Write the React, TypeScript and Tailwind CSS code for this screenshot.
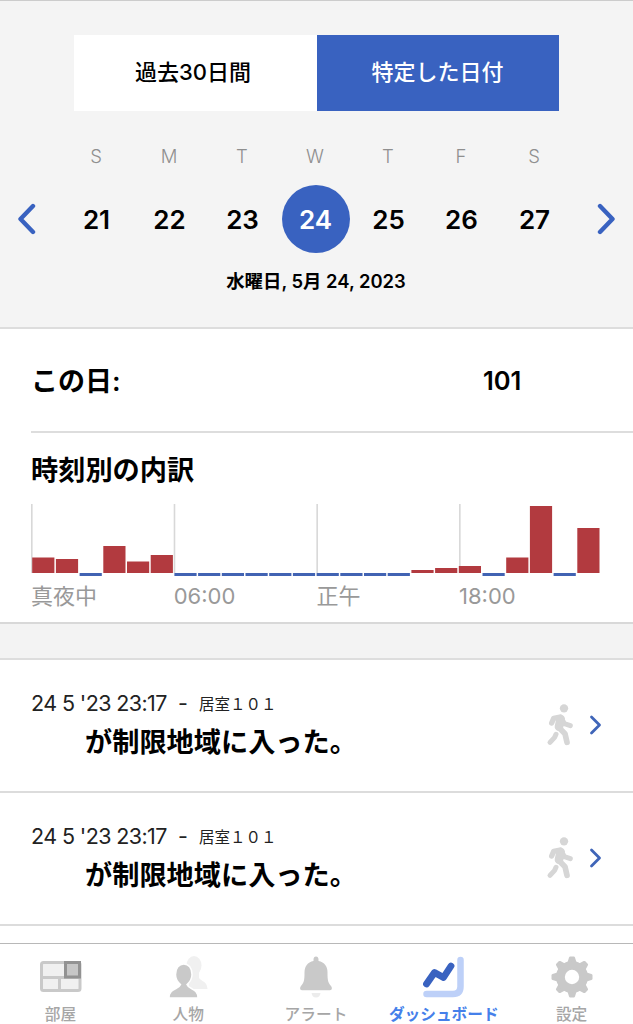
import React from 'react';

type DayItem = { letter: string; date: number };

const days: DayItem[] = [
    { letter: 'S', date: 21 },
    { letter: 'M', date: 22 },
    { letter: 'T', date: 23 },
    { letter: 'W', date: 24 },
    { letter: 'T', date: 25 },
    { letter: 'F', date: 26 },
    { letter: 'S', date: 27 },
];

// one value per hour, 0 draws the blue baseline mark
const hours = [15.5, 14, 0, 27, 11.5, 18, 0, 0, 0, 0, 0, 0, 0, 0, 0, 0, 3, 5, 7, 0, 15.5, 67, 0, 45];

const hourLabels = ['真夜中', '06:00', '正午', '18:00'];

const events = [
    { id: 1, time: "24 5 '23 23:17", room: '居室１０１', text: 'が制限地域に入った。' },
    { id: 2, time: "24 5 '23 23:17", room: '居室１０１', text: 'が制限地域に入った。' },
];

const Arrow: React.FC<{ left?: boolean }> = ({ left }) => (
    <svg width="20" height="32" viewBox="0 0 20 32" fill="none" stroke="#3962c0" strokeWidth="4.4" strokeLinecap="round" strokeLinejoin="round">
        <path d={left ? 'M16 3 3.5 16 16 29' : 'M4 3 16.5 16 4 29'} />
    </svg>
);

const HourChart: React.FC = () => (
    <svg width="602" height="73" viewBox="0 0 602 73" className="block">
        {[0, 6, 12, 18].map(h => (
            <rect key={h} x={h * 23.78} y="0" width="1.6" height="69" fill="#d8d8d8" />
        ))}
        {hours.map((v, i) => (
            v > 0
                ? <rect key={i} x={1.2 + i * 23.7} y={69 - v} width="22.2" height={v} fill="#b23a3f" />
                : <rect key={i} x={1.2 + i * 23.7} y="69" width="22.2" height="3" fill="#4163b3" />
        ))}
    </svg>
);

const WalkIcon: React.FC = () => (
    <svg width="30" height="44" viewBox="80 70 90 132" fill="none" stroke="#d6d6d6" strokeLinecap="round" strokeLinejoin="round">
        <circle cx="134" cy="86" r="12.5" fill="#d6d6d6" stroke="none" />
        <path d="M97 130 103 116 122 112" strokeWidth="16" />
        <path d="M126 115 135 132 153 138" strokeWidth="15" />
        <path d="M124 118 119 141" strokeWidth="26" />
        <path d="M120 145 137 162 143 188" strokeWidth="17" />
        <path d="M110 164 106 173 92 188" strokeWidth="15" />
    </svg>
);

const RoomsIcon: React.FC = () => (
    <svg width="42" height="42" viewBox="0 0 42 42">
        <rect x="1.5" y="6.5" width="38.5" height="28" rx="2" fill="#f0f0f0" stroke="#c9c9c9" strokeWidth="3" />
        <path d="M2 21.5H40M19.5 21.5V34" stroke="#c9c9c9" strokeWidth="3" />
        <rect x="25.5" y="6.5" width="14" height="14.5" fill="#c6c6c6" stroke="#929292" strokeWidth="3" />
    </svg>
);

const PeopleIcon: React.FC = () => (
    <svg width="42" height="42" viewBox="0 0 42 42">
        <g fill="#f0f0f0">
            <ellipse cx="26" cy="9.5" rx="7.5" ry="9.5" />
            <path d="M21 16h10v6c3 4 8 3 8.5 11H21Z" />
        </g>
        <path d="M1 42c0-10 10-8.5 11.5-13.5C9.5 26 7.5 23 7.5 18.5 7.5 12 11 8 15.8 8S24 12 24 18.5c0 4.5-2 7.5-5 10C20.5 33.5 30 32 30 42Z" fill="#c9c9c9" stroke="#fff" strokeWidth="1.5" />
    </svg>
);

const BellIcon: React.FC = () => (
    <svg width="42" height="42" viewBox="0 0 42 42">
        <path d="M16.5 37h9c-.5 3-2 4.500-4.500 4.500s-4-1.500-4.500-4.500Z" fill="#ececec" />
        <path d="M21 .5c1.500 0 2.500 1 2.500 3v1.500c6 1 9 5.500 9 11.500 0 8 .5 10 3.500 13.500 1.500 2 1 4.200-1 4.200H7c-2 0-2.500-2.200-1-4.200 3-3.500 3.500-5.500 3.500-13.500 0-6 3-10.500 9-11.500v-1.500c0-2 1-3 2.500-3Z" fill="#c9c9c9" />
    </svg>
);

const DashboardIcon: React.FC = () => (
    <svg width="42" height="42" viewBox="0 0 42 42" fill="none" strokeLinecap="round" strokeLinejoin="round">
        <path d="M3.5 38H30Q37.5 38 37.5 30.5V4" stroke="#bdd0f8" strokeWidth="6.5" />
        <path d="M3.5 28 11.5 16.5 20.5 21.5 28 10" stroke="#3962c0" strokeWidth="6.8" />
    </svg>
);

const GearIcon: React.FC = () => (
    <svg width="42" height="42" viewBox="0 0 42 42">
        <g fill="#c9c9c9">
            {[0, 45, 90, 135, 180, 225, 270, 315].map(a => (
                <path key={a} d="M16 8 18 1.5Q18.3.5 19.3.5h3.4q1 0 1.3 1L26 8Z" transform={`rotate(${a} 21 21)`} />
            ))}
            <circle cx="21" cy="21" r="16" />
        </g>
        <circle cx="21" cy="21" r="7.2" fill="#fff" />
    </svg>
);

const tabs = [
    { label: '部屋', icon: <RoomsIcon /> },
    { label: '人物', icon: <PeopleIcon /> },
    { label: 'アラート', icon: <BellIcon /> },
    { label: 'ダッシュボード', icon: <DashboardIcon />, active: true },
    { label: '設定', icon: <GearIcon /> },
];

const App: React.FC = () => {
    return (
        <div className="w-[633px] h-[1024px] overflow-hidden bg-white text-black flex flex-col whitespace-nowrap font-['Inter','Noto_Sans_CJK_JP',sans-serif]">
            <header className="h-[329px] shrink-0 bg-[#f4f4f4] border-t border-t-[#cccccc] border-b-2 border-b-[#dddddd] flex flex-col items-center">
                <div className="mt-[34px] mr-px w-[485px] h-[76px] flex shrink-0 text-[22px] font-medium">
                    <button className="w-[243px] bg-white pr-1 pb-[2px]">過去30日間</button>
                    <button className="w-[242px] bg-[#3962c0] text-white pb-[2px]">特定した日付</button>
                </div>
                <div className="mt-[32px] w-[511px] mr-[3px] grid grid-cols-7 text-center text-[18.5px] leading-[26px] text-[#8f8f8f] font-light">
                    {days.map(d => <span key={d.date}>{d.letter}</span>)}
                </div>
                <div className="mt-[16px] w-full pl-[17px] pr-[17px] h-[68px] flex items-center justify-between">
                    <Arrow left />
                    <div className="grid grid-cols-7 w-[511px] mr-[2px] text-[26px] font-semibold">
                        {days.map(d => (
                            <div key={d.date} className="flex justify-center">
                                <span className={d.date === 24
                                    ? 'size-[68px] rounded-full bg-[#3962c0] text-white flex items-center justify-center'
                                    : 'size-[68px] flex items-center justify-center'}>{d.date}</span>
                            </div>
                        ))}
                    </div>
                    <Arrow />
                </div>
                <p className="mt-[14px] mr-px text-[18.4px] leading-[28px] font-semibold">水曜日, 5月 24, 2023</p>
            </header>

            <section className="shrink-0 h-[295px] border-b-2 border-[#d8d8d8]">
                <div className="ml-[31px] h-[104px] pt-[3px] border-b-2 border-[#dddddd] flex items-center text-[27px] font-semibold">
                    <h2 className="w-[452px] pt-[2px]">この日:</h2>
                    <span className="text-[25.5px]">101</span>
                </div>
                <h2 className="ml-[31px] mt-[18px] h-[40px] leading-[40px] text-[27.2px] font-semibold">時刻別の内訳</h2>
                <div className="ml-[31px] mt-[13px]">
                    <HourChart />
                    <div className="mt-[3px] grid grid-cols-[repeat(4,142.7px)] text-[22px] leading-[32px] text-[#999999]">
                        {hourLabels.map(l => <span key={l}>{l}</span>)}
                    </div>
                </div>
            </section>

            <div className="h-[36px] shrink-0 bg-[#f3f3f3] border-b-2 border-[#dddddd]" />

            {events.map(ev => (
                <div key={ev.id} className="h-[133px] shrink-0 border-b-2 border-[#dcdcdc] flex items-center">
                    <div className="w-[515px] ml-[31px] pb-[1px]">
                        <div className="flex items-center h-[34px] text-[21.5px] text-[#222222]">
                            <span className="w-[147px] tracking-[-0.6px]">{ev.time}</span>
                            <span className="w-[21px]">-</span>
                            <span className="text-[15.5px] font-normal font-['Noto_Sans_CJK_JP',sans-serif]">{ev.room}</span>
                        </div>
                        <p className="ml-[54px] mt-px h-[42px] leading-[42px] text-[27.2px] font-bold">{ev.text}</p>
                    </div>
                    <div className="flex items-center pb-[2px]">
                        <WalkIcon />
                        <svg width="14" height="22" viewBox="0 0 14 22" fill="none" stroke="#3f65b8" strokeWidth="2.8" strokeLinecap="round" strokeLinejoin="round" className="ml-[13px]">
                            <path d="M2.5 3 10.5 11 2.5 19" />
                        </svg>
                    </div>
                </div>
            ))}

            <nav className="mt-auto h-[81px] shrink-0 border-t border-[#b8b8b8]">
                <div className="-ml-[3px] w-[639px] grid grid-cols-5 pt-[12px]">
                    {tabs.map(t => (
                        <div key={t.label} className="flex flex-col items-center">
                            {t.icon}
                            <span className={t.active
                                ? 'mt-[5px] mr-px text-[15.7px] leading-[24px] font-bold text-[#4580ea]'
                                : 'mt-[5px] mr-px text-[15.7px] leading-[24px] font-medium text-[#a6a6a6]'}>{t.label}</span>
                        </div>
                    ))}
                </div>
            </nav>
        </div>
    );
};

export default App;
